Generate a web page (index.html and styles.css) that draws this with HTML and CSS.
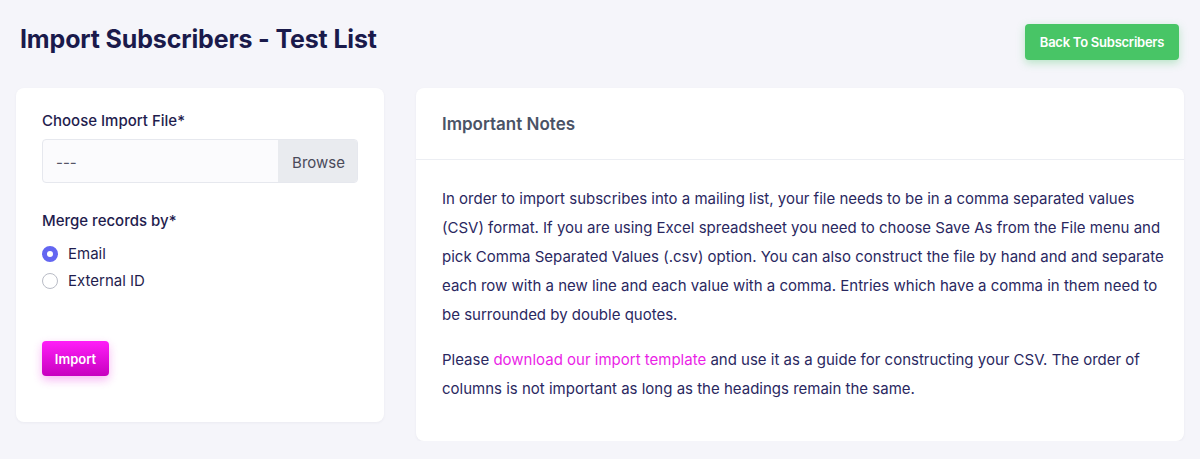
FILE: index.html
```html
<!DOCTYPE html>
<html>
<head>
<meta charset="utf-8">
<link rel="stylesheet" href="styles.css">
</head>
<body>
<div class="page">
  <header class="page-header">
    <h1 class="title">Import Subscribers - Test List</h1>
    <a class="btn btn-green" href="#">Back To Subscribers</a>
  </header>
  <div class="layout">
    <section class="card form-card">
      <label class="field-label">Choose Import File*</label>
      <div class="file-input">
        <span class="file-name">---</span>
        <span class="file-browse">Browse</span>
      </div>
      <div class="field-label merge-label">Merge records by*</div>
      <div class="radio-row">
        <span class="radio checked"></span>
        <span class="radio-text">Email</span>
      </div>
      <div class="radio-row">
        <span class="radio"></span>
        <span class="radio-text">External ID</span>
      </div>
      <a class="btn btn-pink" href="#">Import</a>
    </section>
    <section class="card notes-card">
      <div class="notes-header">Important Notes</div>
      <div class="notes-body">
        <p>In order to import subscribes into a mailing list, your file needs to be in a comma separated values<br>(CSV) format. If you are using Excel spreadsheet you need to choose Save As from the File menu and<br>pick Comma Separated Values (.csv) option. You can also construct the file by hand and and separate<br>each row with a new line and each value with a comma. Entries which have a comma in them need to<br>be surrounded by double quotes.</p>
        <p>Please <a class="link" href="#">download our import template</a> and use it as a guide for constructing your CSV. The order of<br>columns is not important as long as the headings remain the same.</p>
      </div>
    </section>
  </div>
</div>
</body>
</html>
```

FILE: styles.css
```css
* { box-sizing: border-box; }
html, body {
  margin: 0;
  padding: 0;
  background: #f5f5fa;
  font-family: "Inter", "Liberation Sans", sans-serif;
  color: #1e1c4e;
}
.page {
  padding: 0 16px;
}
.page-header {
  display: flex;
  justify-content: space-between;
  align-items: flex-start;
  padding: 24px 5px 0 4px;
  height: 88px;
}
.title {
  margin: 0;
  font-size: 25px;
  font-weight: 700;
  line-height: 30px;
  color: #1a1a4b;
  letter-spacing: -0.15px;
}
.btn {
  display: inline-flex;
  align-items: center;
  justify-content: center;
  text-decoration: none;
  color: #fff;
  font-size: 13px;
  font-weight: 600;
  border-radius: 4px;
}
.btn-green {
  height: 36px;
  width: 154px;
  background: #48c566;
  letter-spacing: -0.25px;
  box-shadow: 0 3px 8px rgba(72, 197, 102, 0.35);
}
.layout {
  display: grid;
  grid-template-columns: 368px 1fr;
  gap: 32px;
  align-items: start;
}
.card {
  background: #fff;
  border-radius: 8px;
  box-shadow: 0 1px 3px rgba(30, 30, 80, 0.05);
}
.form-card {
  padding: 22px 26px 46px;
  display: flex;
  flex-direction: column;
  align-items: flex-start;
  height: 334px;
}
.field-label {
  font-size: 15px;
  line-height: 22px;
  color: #1f1d4e;
  font-weight: 450;
}
.file-input {
  margin-top: 7px;
  width: 316px;
  height: 44px;
  display: flex;
  border: 1px solid #e6e8ee;
  border-radius: 4px;
  overflow: hidden;
  background: #fbfbfd;
}
.file-name {
  flex: 1;
  display: flex;
  align-items: center;
  padding: 2px 0 0 13px;
  font-size: 15px;
  color: #555566;
}
.file-browse {
  width: 79px;
  display: flex;
  align-items: center;
  justify-content: center;
  padding-top: 2px;
  padding-left: 2px;
  background: #e9ebef;
  font-size: 15px;
  color: #4a4a5a;
}
.merge-label {
  margin-top: 27px;
  margin-bottom: 8px;
}
.radio-row {
  display: flex;
  align-items: center;
  height: 27px;
  gap: 10px;
}
.radio {
  width: 16px;
  height: 16px;
  border-radius: 50%;
  border: 1px solid #b9bcc6;
  background: #fff;
}
.radio.checked {
  border: 5px solid #6366f1;
}
.radio-text {
  font-size: 15px;
  color: #1f1d4e;
}
.btn-pink {
  margin-top: 47px;
  width: 67px;
  height: 35px;
  background: linear-gradient(180deg, #ff1ff8 0%, #c700bf 100%);
  box-shadow: 0 4px 10px rgba(230, 20, 220, 0.3);
}
.notes-header {
  height: 72px;
  display: flex;
  align-items: center;
  padding: 0 26px;
  border-bottom: 1px solid #eceef3;
  font-size: 17px;
  font-weight: 600;
  color: #4a5366;
}
.notes-body {
  padding: 24px 4px 22px 26px;
}
.notes-body p {
  margin: 0 0 16px;
  font-size: 15px;
  line-height: 29px;
  color: #2a285f;
  white-space: nowrap;
}
.link {
  color: #ea1fe6;
  text-decoration: none;
}
```
